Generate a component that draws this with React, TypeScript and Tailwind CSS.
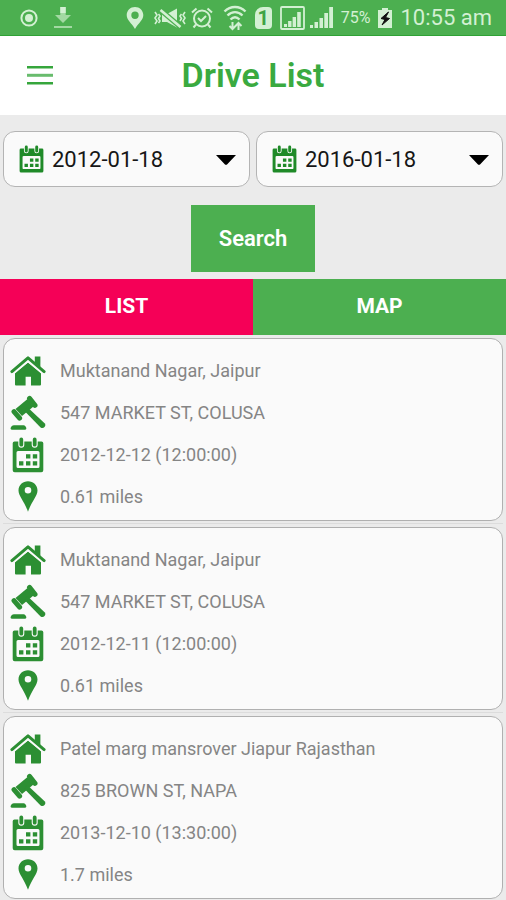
import React, { useState } from "react";

type IconProps = { className?: string };

const drives = [
  { id: 1, place: "Muktanand Nagar, Jaipur", address: "547 MARKET ST, COLUSA", date: "2012-12-12 (12:00:00)", distance: "0.61 miles" },
  { id: 2, place: "Muktanand Nagar, Jaipur", address: "547 MARKET ST, COLUSA", date: "2012-12-11 (12:00:00)", distance: "0.61 miles" },
  { id: 3, place: "Patel marg mansrover Jiapur Rajasthan", address: "825 BROWN ST, NAPA", date: "2013-12-10 (13:30:00)", distance: "1.7 miles" },
];

const HouseIcon = ({ className }: IconProps) => (
  <svg viewBox="0 0 36 30" className={className} fill="currentColor" aria-hidden="true">
    <path d="M18 6.500 31 17v11.400a1 1 0 0 1-1 1H21v-8.600h-5.400v8.600H6a1 1 0 0 1-1-1V17z" />
    <path d="M24.800.4h5.600v11l-5.600-4.600z" />
    <path d="M3.200 18 18 5.400 32.800 18" fill="none" stroke="#fafafa" strokeWidth="1.400" />
    <path d="M1.900 15.600 18 1.900l16.100 13.700" fill="none" stroke="currentColor" strokeWidth="3" strokeLinecap="round" strokeLinejoin="round" />
  </svg>
);

const GavelIcon = ({ className }: IconProps) => (
  <svg viewBox="0 0 36 36" className={className} fill="currentColor" aria-hidden="true">
    <path d="M17.500 4 23.500 11.500 12 21 5.500 14z" />
    <path d="M19.500 3.400 25 10.400M4 16.600l5.600 6.600" fill="none" stroke="currentColor" strokeWidth="5" strokeLinecap="round" />
    <path d="M17.200 12 34.600 28.200c2.400 2.600-1.200 6.400-4 4.200L14.500 16z" />
    <path d="M4 30.200h9.600c1.500 0 1.800 1 2.400 2 .7 1.100.3 2.600-1 2.600H2c-1.400 0-1.800-1.500-1-2.600.6-1 1-2 3-2z" />
  </svg>
);

const CalendarIcon = ({ className }: IconProps) => (
  <svg viewBox="0 0 32 36" className={className} fill="currentColor" aria-hidden="true">
    <path
      fillRule="evenodd"
      d="M2.500 4.500h27A1.800 1.800 0 0 1 31.300 6.300v27a2 2 0 0 1-2 2H2.700a2 2 0 0 1-2-2v-27A1.800 1.800 0 0 1 2.500 4.500zM6 14a1.500 1.500 0 0 0-1.500 1.500v14A1.500 1.500 0 0 0 6 31h20a1.500 1.500 0 0 0 1.500-1.500v-14A1.500 1.500 0 0 0 26 14z"
    />
    <path d="M9.300 2.500v5.200M22.700 2.500v5.200" stroke="#fafafa" strokeWidth="6" strokeLinecap="round" />
    <path d="M9.300 2.500v5.200M22.700 2.500v5.200" stroke="currentColor" strokeWidth="3.800" strokeLinecap="round" />
    <path d="M14 17.200h4.400v4.200H14zM20.800 17.200h4.400v4.200h-4.400zM7 24.200h4.400v4.200H7zM14 24.200h4.400v4.200H14zM20.800 24.200h4.400v4.200h-4.400z" />
  </svg>
);

const PinIcon = ({ className }: IconProps) => (
  <svg viewBox="0 0 20 32" className={className} fill="currentColor" aria-hidden="true">
    <path fillRule="evenodd" d="M10 .3c5.200 0 9.500 3.900 9.500 9.200C19.500 15 13.500 20.500 10 30.800 6.500 20.500.5 15 .5 9.500.5 4.200 4.800.3 10 .3zm0 5.600a3.300 3.300 0 1 0 0 6.600 3.300 3.300 0 0 0 0-6.600z" />
  </svg>
);

function StatusBar() {
  return (
    <div className="flex h-9 items-center justify-between border-b border-[#2fa235] bg-[#4caf50] pr-3.5 pl-5 text-[#d3f0d3]">
      <div className="flex items-center gap-4">
        <svg viewBox="0 0 18 18" className="size-[18px]" aria-hidden="true">
          <circle cx="9" cy="9" r="7.600" fill="none" stroke="currentColor" strokeWidth="2" />
          <circle cx="9" cy="9" r="4" fill="currentColor" />
        </svg>
        <svg viewBox="0 0 18 22" className="h-[22px] w-[18px] text-[#a3d9a3]" fill="currentColor" aria-hidden="true">
          <path d="M6.300 0h5.400v8H17l-8 8-8-8h5.300z" />
          <path d="M0 19h18v2H0z" />
          <path d="M6.300 0h5.400v6H6.300z" fill="#d3f0d3" />
        </svg>
      </div>
      <div className="flex items-center gap-1">
        <svg viewBox="0 0 20 26" className="mr-1 h-6 w-5" fill="currentColor" aria-hidden="true">
          <path fillRule="evenodd" d="M10 1c5 0 9 3.800 9 8.800C19 15.500 14 18 10 25 6 18 1 15.500 1 9.800 1 4.800 5 1 10 1zm0 5a4 4 0 1 0 0 8 4 4 0 0 0 0-8z" />
        </svg>
        <svg viewBox="0 0 34 22" className="h-[22px] w-[34px]" fill="none" stroke="currentColor" strokeWidth="1.600" aria-hidden="true">
          <path d="M9 7h5L24 1.500v19L14 15H9z" fill="currentColor" stroke="none" />
          <path d="M7.500 3 27.500 20" stroke="#4caf50" strokeWidth="5" />
          <path d="M7.500 3 27.500 20" strokeWidth="2.600" />
          <path d="m2 5 2 3-2 3 2 3-2 3M5.500 7l1.500 2-1.500 2.500L7 14l-1.500 2M32 5l-2 3 2 3-2 3 2 3M28.500 7 27 9l1.500 2.500L27 14" />
        </svg>
        <svg viewBox="0 0 22 22" className="size-[22px]" fill="none" stroke="currentColor" strokeWidth="2" aria-hidden="true">
          <circle cx="11" cy="11.500" r="8" />
          <path d="m7 11 3 3 5-5M1 5.500 5.500 1.500M21 5.500 16.500 1.500M5 17.500l-2.500 3M17 17.500l2.500 3" />
        </svg>
        <svg viewBox="0 0 24 26" className="ml-1.5 h-[26px] w-6" fill="none" stroke="currentColor" strokeWidth="2.400" aria-hidden="true">
          <path d="M1.500 6.500c6-6 15-6 21 0M4.500 10.500c4.500-4.500 10.500-4.500 15 0M7.500 14.500c3-3 6-3 9 0" />
          <path d="M9.500 17v7M6.500 21l3 3 3-3M15.500 25v-7M12.500 21l3-3 3 3" strokeWidth="2" />
        </svg>
        <span className="ml-1 flex h-[22px] w-[17px] items-center justify-center rounded-sm rounded-tl-lg bg-[#d3f0d3] text-xl font-bold text-[#3fa344]">1</span>
        <svg viewBox="0 0 25 24" className="ml-1 h-6 w-[25px]" fill="currentColor" aria-hidden="true">
          <rect x="1" y="1" width="23" height="22" rx="1" fill="none" stroke="currentColor" strokeWidth="1.800" />
          <path d="M4 18h3v3H4zM8.100 15h3.400v6H8.100zM12.600 11h3.400v10h-3.400zM17.200 6h3.600v15h-3.600z" />
        </svg>
        <svg viewBox="0 0 24 22" className="h-[22px] w-6" fill="currentColor" aria-hidden="true">
          <path d="M1 18h3v3H1zM5.500 15H9v6H5.500zM10.500 11H14v10h-3.500zM15.300 6H19v15h-3.700zM20.200 0H24v21h-3.800z" />
        </svg>
        <span className="ml-1 text-base">75%</span>
        <svg viewBox="0 0 14 20" className="ml-1 h-5 w-[14px]" aria-hidden="true">
          <path d="M4 0h6v2h4v18H0V2h4z" fill="#d3f0d3" />
          <path d="m10.500 4-7.500 6.500 4 1-3 5.500 7.500-6.500-4-1z" fill="#111" stroke="#111" />
        </svg>
        <span className="ml-1 text-[22px]">10:55 am</span>
      </div>
    </div>
  );
}

function DateSelect({ label, options }: { label: string; options: string[] }) {
  return (
    <div className="relative flex-1">
      <CalendarIcon className="pointer-events-none absolute top-3.5 left-4 h-7 w-[25px] text-[#1f8a28]" />
      <select
        aria-label={label}
        className="h-14 w-full appearance-none rounded-xl border border-[#b4b4b4] bg-[#fafafa] pr-10 pl-12 text-[22px] text-[#161616]"
      >
        {options.map((option) => (
          <option key={option}>{option}</option>
        ))}
      </select>
      <svg viewBox="0 0 20 10" className="pointer-events-none absolute top-6 right-3.5 h-2.5 w-5" aria-hidden="true">
        <path d="M0 0h20L11.500 9a2 2 0 0 1-3 0z" fill="#000" />
      </svg>
    </div>
  );
}

function DriveCard({ drive }: { drive: (typeof drives)[number] }) {
  const rows = [
    { icon: <HouseIcon className="h-[30px] w-9" />, text: drive.place },
    { icon: <GavelIcon className="size-9" />, text: drive.address },
    { icon: <CalendarIcon className="h-9 w-8" />, text: drive.date },
    { icon: <PinIcon className="h-8 w-5" />, text: drive.distance },
  ];

  return (
    <li className="border-b border-[#dcdcdc] pt-[3px] pb-0.5">
      <div className="rounded-xl border border-[#b0b0b0] bg-[#fafafa] px-1.5 pt-[11px] pb-0.5">
        {rows.map((row, i) => (
          <div key={i} className="flex h-[42px] items-center gap-3.5">
            <span className="flex w-9 shrink-0 justify-center text-[#2c8f33]">{row.icon}</span>
            <span className="text-lg text-[#858585]">{row.text}</span>
          </div>
        ))}
      </div>
    </li>
  );
}

export default function App() {
  const [tab, setTab] = useState("list");

  return (
    <div className="min-h-screen bg-[#ebebeb] font-['Roboto',sans-serif]">
      <StatusBar />

      <header className="grid h-[79px] grid-cols-[80px_1fr_80px] items-center bg-white">
        <button type="button" aria-label="Menu" className="flex justify-center text-[#36a63c]">
          <svg viewBox="0 0 26 20" className="h-5 w-[26px]" fill="currentColor" aria-hidden="true">
            <path d="M0 0h26v2.400H0zM0 16h26v2.400H0z" />
            <path d="M0 7.800h26v3H0z" opacity="0.75" />
          </svg>
        </button>
        <h1 className="text-center text-[34px] font-semibold text-[#3aaa40]">Drive List</h1>
      </header>

      {/* Date range filter */}
      <form className="flex flex-col items-center px-[3px] pt-4 pb-[7px]" onSubmit={(e) => e.preventDefault()}>
        <div className="flex w-full gap-1.5">
          <DateSelect label="From date" options={["2012-01-18"]} />
          <DateSelect label="To date" options={["2016-01-18"]} />
        </div>
        <button type="submit" className="mt-[18px] h-[67px] bg-[#4caf50] px-7 text-[22px] font-semibold text-white">
          Search
        </button>
      </form>

      <div className="grid h-14 grid-cols-2 text-[21px] font-bold text-white">
        <button type="button" className={tab === "list" ? "bg-[#f50057]" : "bg-[#4caf50]"} onClick={() => setTab("list")}>
          LIST
        </button>
        <button type="button" className={tab === "map" ? "bg-[#f50057]" : "bg-[#4caf50]"} onClick={() => setTab("map")}>
          MAP
        </button>
      </div>

      <ul className="px-[3px]">
        {drives.map((drive) => (
          <DriveCard key={drive.id} drive={drive} />
        ))}
      </ul>
    </div>
  );
}
